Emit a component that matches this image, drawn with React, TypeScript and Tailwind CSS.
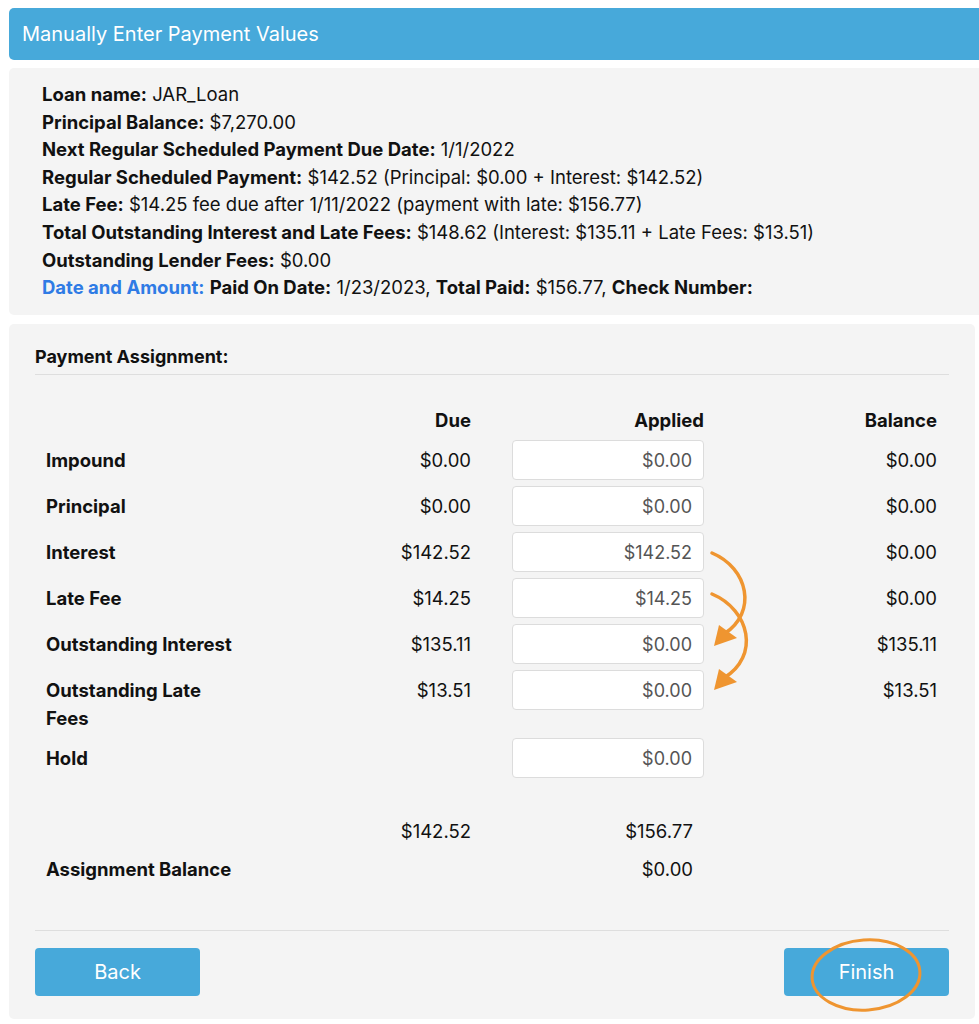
import React from "react";

type Row = { label: string; due: string; applied: string; balance: string };

const rows: Row[] = [
  { label: "Impound", due: "$0.00", applied: "$0.00", balance: "$0.00" },
  { label: "Principal", due: "$0.00", applied: "$0.00", balance: "$0.00" },
  { label: "Interest", due: "$142.52", applied: "$142.52", balance: "$0.00" },
  { label: "Late Fee", due: "$14.25", applied: "$14.25", balance: "$0.00" },
  { label: "Outstanding Interest", due: "$135.11", applied: "$0.00", balance: "$135.11" },
  { label: "Outstanding Late Fees", due: "$13.51", applied: "$0.00", balance: "$13.51" },
  { label: "Hold", due: "", applied: "$0.00", balance: "" },
];

const font = { fontFamily: "Inter, 'Noto Sans', Arial, sans-serif" };

function InfoLine({ label, children }: { label: string; children: React.ReactNode }) {
  return (
    <div>
      <span className="font-bold">{label}</span> {children}
    </div>
  );
}

function AmountInput({ value }: { value: string }) {
  return (
    <input
      readOnly
      value={value}
      className="ml-auto block h-[40px] w-[192px] rounded-[4px] border border-[#dcdcdc] bg-white pr-[11px] text-right text-[18px] text-[#555] outline-none"
    />
  );
}

export default function App() {
  return (
    <div className="relative h-[1024px] w-[979px] overflow-hidden bg-white pt-[8px] text-[#111]" style={font}>
      {/* title bar */}
      <div className="ml-[9px] flex h-[52px] items-center rounded-l-[5px] bg-[#47a9da] pl-[13px] text-[20px] text-white">
        Manually Enter Payment Values
      </div>

      {/* loan summary */}
      <div className="ml-[9px] mt-[8px] h-[247px] rounded-l-[5px] bg-[#f4f4f4] pl-[33px] pt-[13px] text-[18.5px] leading-[27.6px]">
        <InfoLine label="Loan name:">JAR_Loan</InfoLine>
        <InfoLine label="Principal Balance:">$7,270.00</InfoLine>
        <InfoLine label="Next Regular Scheduled Payment Due Date:">1/1/2022</InfoLine>
        <InfoLine label="Regular Scheduled Payment:">$142.52 (Principal: $0.00 + Interest: $142.52)</InfoLine>
        <InfoLine label="Late Fee:">$14.25 fee due after 1/11/2022 (payment with late: $156.77)</InfoLine>
        <InfoLine label="Total Outstanding Interest and Late Fees:">
          $148.62 (Interest: $135.11 + Late Fees: $13.51)
        </InfoLine>
        <InfoLine label="Outstanding Lender Fees:">$0.00</InfoLine>
        <div>
          <span className="font-bold text-[#2f7be5]">Date and Amount:</span>{" "}
          <span className="font-bold">Paid On Date:</span> 1/23/2023,{" "}
          <span className="font-bold">Total Paid:</span> $156.77,{" "}
          <span className="font-bold">Check Number:</span>
        </div>
      </div>

      {/* payment assignment */}
      <div className="ml-[9px] mr-[4px] mt-[9px] rounded-[5px] bg-[#f4f4f4] px-[26px] pb-[23px] pt-[22px]">
        <div className="border-b border-[#dedede] pb-[6px] text-[18px] font-bold leading-[22px]">
          Payment Assignment:
        </div>

        <div className="mt-[31px] pl-[11px] text-[18.5px] leading-[28px]">
          <div className="grid grid-cols-[196px_229px_233px_233px] font-bold">
            <div />
            <div className="text-right">Due</div>
            <div className="text-right">Applied</div>
            <div className="text-right">Balance</div>
          </div>

          <div className="mt-[6px] flex flex-col gap-[6px]">
            {rows.map((r) => (
              <div key={r.label} className="grid grid-cols-[196px_229px_233px_233px] items-start">
                <div className="pt-[6px] font-bold">{r.label}</div>
                <div className="pt-[6px] text-right">{r.due}</div>
                <div>
                  <AmountInput value={r.applied} />
                </div>
                <div className="pt-[6px] text-right">{r.balance}</div>
              </div>
            ))}
          </div>

          <div className="mt-[39px] grid grid-cols-[196px_229px_233px_233px]">
            <div />
            <div className="text-right">$142.52</div>
            <div className="pr-[11px] text-right">$156.77</div>
            <div />
          </div>
          <div className="mt-[10px] grid grid-cols-[196px_229px_233px_233px]">
            <div className="font-bold">Assignment Balance</div>
            <div />
            <div className="pr-[11px] text-right">$0.00</div>
            <div />
          </div>
        </div>

        <div className="mt-[47px] border-t border-[#dedede]" />

        <div className="mt-[17px] flex justify-between">
          <button className="h-[48px] w-[165px] rounded-[4px] bg-[#47a9da] text-[20px] text-white">Back</button>
          <button className="h-[48px] w-[165px] rounded-[4px] bg-[#47a9da] text-[20px] text-white">Finish</button>
        </div>
      </div>

      {/* orange call-out marks drawn over the form */}
      <svg className="pointer-events-none absolute left-0 top-0" width="979" height="1024" viewBox="0 0 979 1024">
        <g fill="none" stroke="#ef9530" strokeWidth="3.5" strokeLinecap="round">
          <path d="M712 553 C 748 568, 758 612, 724 634" />
          <path d="M712 594 C 750 610, 760 656, 724 678" />
          <ellipse cx="866" cy="975" rx="54" ry="35" strokeWidth="3" transform="rotate(-4 866 975)" />
        </g>
        <g fill="#ef9530">
          <polygon points="714,646 719,625 737,638" />
          <polygon points="714,690 719,669 737,682" />
        </g>
      </svg>
    </div>
  );
}
